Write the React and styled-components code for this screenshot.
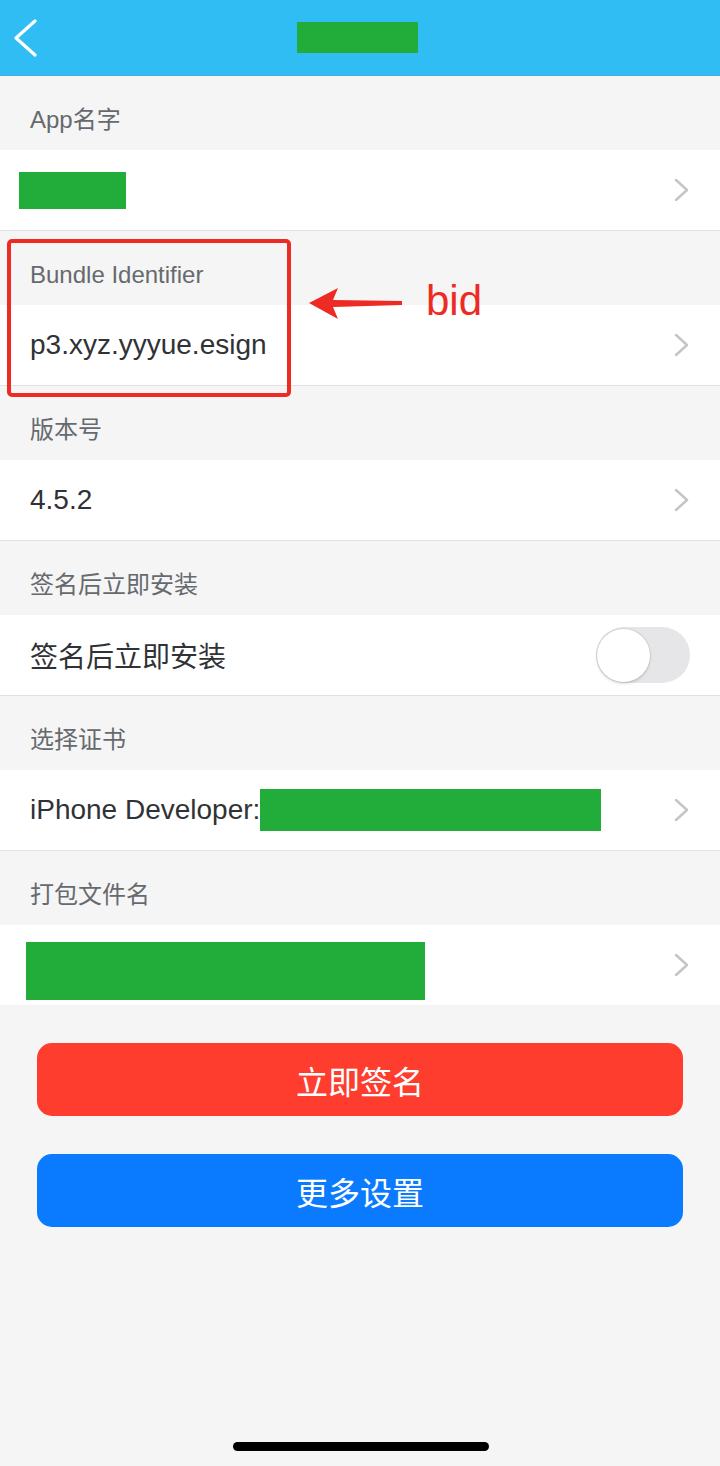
import React from 'react';
import styled, { createGlobalStyle } from 'styled-components';

const GlobalStyle = createGlobalStyle`
  html, body {
    margin: 0;
    padding: 0;
    background: #f5f5f5;
  }
  body {
    font-family: "Liberation Sans", "Noto Sans CJK SC", sans-serif;
  }
`;

const Page = styled.div`
  position: relative;
  width: 720px;
  min-height: 1466px;
  display: flex;
  flex-direction: column;
  background: #f5f5f5;
`;

const NavBar = styled.div`
  height: 75px;
  background: #2fbdf3;
  border-bottom: 1px solid #3fb0da;
  display: grid;
  grid-template-columns: 80px 1fr 80px;
  align-items: center;
`;

const BackButton = styled.div`
  display: flex;
  align-items: center;
  padding-left: 12px;
  height: 100%;
`;

const Redacted = styled.span`
  display: inline-block;
  background: #22ad3a;
  width: ${p => p.$w}px;
  height: ${p => p.$h}px;
  margin-top: ${p => p.$mt || 0}px;
  flex-shrink: 0;
`;

const Title = styled.div`
  display: flex;
  justify-content: center;
  padding-right: 5px;
`;

const SectionHeader = styled.div`
  height: 74px;
  box-sizing: border-box;
  padding: 32px 30px 0;
  font-size: 24px;
  line-height: 24px;
  color: #666a6e;
`;

const Row = styled.div`
  height: 80px;
  background: #fff;
  border-bottom: ${p => (p.$last ? 'none' : '1px solid #e1e1e1')};
  display: flex;
  align-items: center;
  padding: 0 30px 0 ${p => p.$pl ?? 30}px;
`;

const Value = styled.div`
  flex: 1;
  display: flex;
  align-items: center;
  font-size: 28px;
  color: #303236;
  white-space: nowrap;
`;

const Chevron = () => (
  <svg width="16" height="24" viewBox="0 0 16 24">
    <polyline points="2,2 13,12 2,22" fill="none" stroke="#c5c5c8" strokeWidth="2.5" strokeLinecap="round" strokeLinejoin="round" />
  </svg>
);

const Switch = styled.div`
  width: 94px;
  height: 56px;
  border-radius: 28px;
  background: #e6e6e8;
  box-sizing: border-box;
  padding: 1px;
  display: flex;
  align-items: center;
`;

const Knob = styled.div`
  width: 53px;
  height: 53px;
  border-radius: 50%;
  background: #fff;
  box-shadow: 0 0 1px 1px rgba(0, 0, 0, 0.08), 0 2px 3px rgba(0, 0, 0, 0.12);
`;

const Actions = styled.div`
  display: flex;
  flex-direction: column;
  gap: 38px;
  padding: 38px 37px 0;
`;

const ActionButton = styled.div`
  height: 73px;
  border-radius: 15px;
  background: ${p => p.$color};
  color: #fff;
  font-size: 32px;
  display: flex;
  align-items: center;
  justify-content: center;
  font-family: "Noto Sans CJK SC", sans-serif;
`;

const HomeBar = styled.div`
  margin-top: auto;
  display: flex;
  justify-content: center;
  padding-bottom: 15px;
`;

const Indicator = styled.div`
  width: 256px;
  height: 9px;
  border-radius: 5px;
  background: #000;
  margin-left: 1px;
`;

const Highlight = styled.div`
  position: absolute;
  left: 7px;
  top: 239px;
  width: 284px;
  height: 158px;
  box-sizing: border-box;
  border: 4px solid #ee2a24;
  border-radius: 5px;
`;

const ArrowMark = styled.svg`
  position: absolute;
  left: 305px;
  top: 284px;
`;

const Note = styled.div`
  position: absolute;
  left: 426px;
  top: 280px;
  font-size: 42px;
  line-height: 42px;
  color: #ee2a24;
`;

const sections = [
  { header: 'App名字', content: <Redacted $w={107} $h={37} />, pl: 19 },
  { header: 'Bundle Identifier', content: 'p3.xyz.yyyue.esign' },
  { header: '版本号', content: '4.5.2' },
  { header: '签名后立即安装', content: '签名后立即安装', toggle: true },
  { header: '选择证书', content: <>iPhone Developer:<Redacted $w={341} $h={42} /></> },
  { header: '打包文件名', content: <Redacted $w={399} $h={58} $mt={12} />, pl: 26, last: true },
];

export default function App() {
  return (
    <Page>
      <GlobalStyle />
      <NavBar>
        <BackButton>
          <svg width="28" height="38" viewBox="0 0 28 38">
            <polyline points="23,2 4,19 23,36" fill="none" stroke="#fff" strokeWidth="3.2" strokeLinecap="round" strokeLinejoin="round" />
          </svg>
        </BackButton>
        <Title>
          <Redacted $w={121} $h={31} />
        </Title>
        <div />
      </NavBar>

      {sections.map(s => (
        <React.Fragment key={s.header}>
          <SectionHeader>{s.header}</SectionHeader>
          <Row $pl={s.pl} $last={s.last}>
            <Value>{s.content}</Value>
            {s.toggle ? (
              <Switch>
                <Knob />
              </Switch>
            ) : (
              <Chevron />
            )}
          </Row>
        </React.Fragment>
      ))}

      <Actions>
        <ActionButton $color="#fe3d2f">立即签名</ActionButton>
        <ActionButton $color="#0a7afe">更多设置</ActionButton>
      </Actions>

      <HomeBar>
        <Indicator />
      </HomeBar>

      <Highlight />
      <ArrowMark width="100" height="38" viewBox="0 0 100 38">
        <polygon points="4,19 33,4 28,16 97,17 97,21 28,23 33,35" fill="#ee2a24" />
      </ArrowMark>
      <Note>bid</Note>
    </Page>
  );
}
